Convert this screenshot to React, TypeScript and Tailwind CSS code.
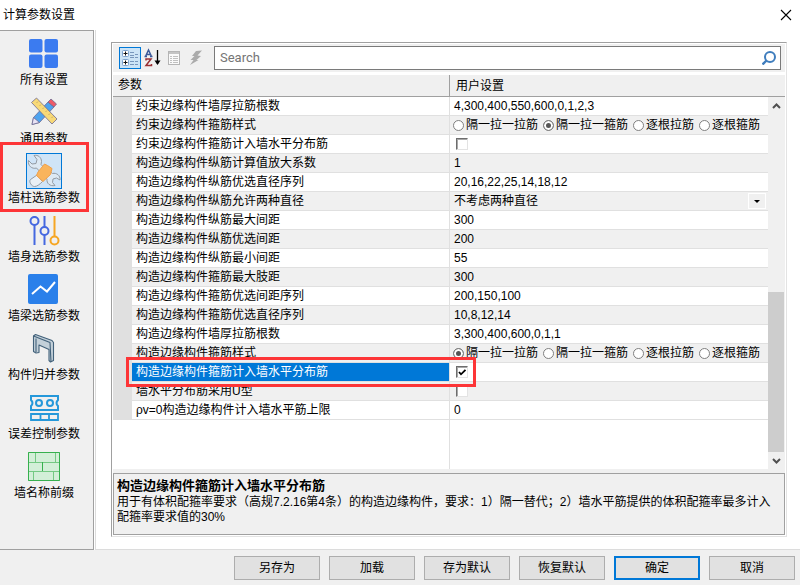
import { useState } from "react";

type Field =
    | { kind: "text"; name: string; value: string }
    | { kind: "select"; name: string; options: string[] }
    | { kind: "check"; name: string; checked: boolean; selected?: boolean }
    | { kind: "radio"; name: string; id: string; value: number };

const STYLES = ["隔一拉一拉筋", "隔一拉一箍筋", "逐根拉筋", "逐根箍筋"];

const FIELDS: Field[] = [
    { kind: "text", name: "约束边缘构件墙厚拉筋根数", value: "4,300,400,550,600,0,1,2,3" },
    { kind: "radio", name: "约束边缘构件箍筋样式", id: "ys-style", value: 1 },
    { kind: "check", name: "约束边缘构件箍筋计入墙水平分布筋", checked: false },
    { kind: "text", name: "构造边缘构件纵筋计算值放大系数", value: "1" },
    { kind: "text", name: "构造边缘构件纵筋优选直径序列", value: "20,16,22,25,14,18,12" },
    { kind: "select", name: "构造边缘构件纵筋允许两种直径", options: ["不考虑两种直径", "考虑两种直径"] },
    { kind: "text", name: "构造边缘构件纵筋最大间距", value: "300" },
    { kind: "text", name: "构造边缘构件纵筋优选间距", value: "200" },
    { kind: "text", name: "构造边缘构件纵筋最小间距", value: "55" },
    { kind: "text", name: "构造边缘构件箍筋最大肢距", value: "300" },
    { kind: "text", name: "构造边缘构件箍筋优选间距序列", value: "200,150,100" },
    { kind: "text", name: "构造边缘构件箍筋优选直径序列", value: "10,8,12,14" },
    { kind: "text", name: "构造边缘构件墙厚拉筋根数", value: "3,300,400,600,0,1,1" },
    { kind: "radio", name: "构造边缘构件箍筋样式", id: "gz-style", value: 0 },
    { kind: "check", name: "构造边缘构件箍筋计入墙水平分布筋", checked: true, selected: true },
    { kind: "check", name: "墙水平分布筋采用U型", checked: false },
    { kind: "text", name: "ρv=0构造边缘构件计入墙水平筋上限", value: "0" },
];

const GridIcon = () => (
    <svg viewBox="0 0 36 36" className="size-full" fill="#3b7bf0">
        <rect x="3" y="4" width="13.5" height="13.5" rx="2" />
        <rect x="18.5" y="4" width="13.5" height="13.5" rx="2" />
        <rect x="3" y="19.5" width="13.5" height="13.5" rx="2" />
        <rect x="18.5" y="19.5" width="13.5" height="13.5" rx="2" />
    </svg>
);

const PencilRulerIcon = () => (
    <svg viewBox="0 0 36 36" className="size-full" stroke="#6d6a92" strokeWidth=".8" strokeLinejoin="round">
        <path d="M6 30.500 7.500 23.500 22 8 28 13 13.500 28.500Z" fill="#4ea3ee" />
        <path d="M6 30.500 7.500 23.500 13.500 28.500Z" fill="#e9e3f5" />
        <path d="M22 8 25 5 30.500 10 28 13Z" fill="#ee5a68" />
        <path d="M5.500 8.500 10.500 4 31 25 26 30Z" fill="#f8d978" />
        <path d="m12 7.500-1.500 1.500m4.500 1.500-1.500 1.500m4.500 1.500-1.500 1.500m4.500 1.500-1.500 1.500m4.500 1.500-1.500 1.500m4.500 1.500-1.500 1.500" fill="none" stroke="#b59a5c" strokeWidth=".7" />
    </svg>
);

const WrenchIcon = () => (
    <svg viewBox="0 0 36 36" className="size-full" fill="#dde9f3" stroke="#939ba3" strokeWidth="1" strokeLinejoin="round">
        <path d="M8 2.500C12 1.500 15.500 4.500 15.500 8.500L15 11.500l7 7-4 4.500-7.500-8C6 16.500 1.500 12.500 2.500 7.500l3.500 3.500 4-.500 1-4Z" />
        <path d="m22 17 4.500 3.500c4-1 8 2 7.500 6.500L30.500 25 27 26l-.500 3.500 2.500 3c-5 1-8.500-2-8-6.500L17.500 22Z" />
        <path d="m11 22-6.500 4.500c-2 2 1 7 4 7 2.500 0 5-2 8-5Z" fill="#eaf0f5" />
        <path d="m18.500 11 3 1.500 4.500 3-1.500 6-7.500 7-6.500-6 1.500-3.500Z" fill="#f9b45c" stroke="#f0a04a" />
    </svg>
);

const SlidersIcon = () => (
    <svg viewBox="0 0 36 36" className="size-full" fill="none" strokeWidth="2">
        <g stroke="#4568e0">
            <circle cx="8.500" cy="9" r="4" />
            <path d="M8.500 4v1M8.500 13v20M18.500 4v11M18.500 23v10" />
            <circle cx="18.500" cy="19" r="4" />
        </g>
        <path d="M28.500 4v20" stroke="#f6a623" />
        <circle cx="28.500" cy="28.500" r="4" stroke="#f6a623" />
    </svg>
);

const TrendIcon = () => (
    <svg viewBox="0 0 36 36" className="size-full">
        <rect x="2" y="3" width="30" height="30" rx="2" fill="#2a80ea" />
        <path d="m6 23 8.500-7.500 6.500 5L29 11" fill="none" stroke="#fff" strokeWidth="2" />
    </svg>
);

const FrameIcon = () => (
    <svg viewBox="0 0 36 36" className="size-full" fill="#c3d0d9" stroke="#42617a" strokeWidth="1.100" strokeLinejoin="round">
        <path d="m7.500 6 2-1.500 16.500 6 1.500 2v18L24.500 32 23 30.500V19.500L13 15v7.500l-3 .500-2.500-1.500Z" />
        <path d="M7.500 6 24 12.500 25 32M10 8.500V22" fill="none" />
    </svg>
);

const ToleranceIcon = () => (
    <svg viewBox="0 0 36 36" className="size-full" fill="none" stroke="#2598da" strokeWidth="2">
        <path d="M5 7h27v4q-3 3 0 6v4H5v-4q3-3 0-6Z" />
        <circle cx="13" cy="14" r="3" />
        <circle cx="24" cy="14" r="3" />
        <path d="M5 25h27v6H5ZM14.500 25v6M23 25v6" strokeWidth="1.800" />
    </svg>
);

const BrickIcon = () => (
    <svg viewBox="0 0 36 36" className="size-full" fill="none" stroke="#74c983" strokeWidth="1">
        <path d="M2.500 4.500h31v28h-31Z" fill="#d3efd8" />
        <path d="M3 14.500h30M3 23.500h30M9.500 5v9M29.500 5v9M7.500 24v8M27.500 24v8" />
        <path d="M2.500 4.500h31v28h-31ZM16.500 14v9" stroke="#36b04e" />
    </svg>
);

const NAV = [
    { label: "所有设置", Icon: GridIcon },
    { label: "通用参数", Icon: PencilRulerIcon },
    { label: "墙柱选筋参数", Icon: WrenchIcon },
    { label: "墙身选筋参数", Icon: SlidersIcon },
    { label: "墙梁选筋参数", Icon: TrendIcon },
    { label: "构件归并参数", Icon: FrameIcon },
    { label: "误差控制参数", Icon: ToleranceIcon },
    { label: "墙名称前缀", Icon: BrickIcon },
];

const Sidebar = () => {
    const [active, setActive] = useState(2);

    return (
        <nav className="w-[94px] shrink-0 border-t border-r border-b border-[#a0a0a0] bg-[#f0f0f0] pt-1 pr-[5px]">
            <ul className="flex flex-col gap-[5px]">
                {NAV.map(({ label, Icon }, i) => (
                    <li key={label} className="relative">
                        <button onClick={() => setActive(i)} className="flex w-full flex-col items-center">
                            <span className={i === active ? "size-9 bg-[#cfe4f7] outline outline-1 -outline-offset-1 outline-[#0078d7]" : "size-9"}>
                                <Icon />
                            </span>
                            <span className="leading-[18px] whitespace-nowrap">{label}</span>
                        </button>
                        {i === 2 && (
                            <span className="pointer-events-none absolute -top-[11px] -right-px -bottom-[5px] left-0 z-10 border-3 border-[#fd3537]" />
                        )}
                    </li>
                ))}
            </ul>
        </nav>
    );
};

const Toolbar = () => (
    <div className="flex items-center bg-[#f0f0f0] py-[2px] pr-[4px] pl-[6px]">
        <button aria-label="按类别" className="size-[22px] border border-[#0078d7] bg-[#cce4f7]">
            <svg viewBox="0 0 20 20" className="size-5" fill="none">
                <rect x="2.500" y="2.500" width="6" height="6" rx="1" fill="#fff" stroke="#7da2ce" />
                <rect x="2.500" y="11.500" width="6" height="6" rx="1" fill="#fff" stroke="#7da2ce" />
                <path d="M3.500 5.500h4M5.500 3.500v4M3.500 14.500h4M5.500 12.500v4" stroke="#111" />
                <path d="M10 4.500h4M10 7.500h4M10 9.500h4M10 13.500h4M10 16.500h4M15 6.500h3M15 9.500h3M15 13.500h3M15 16.500h3" stroke="#7897bd" />
            </svg>
        </button>
        <button aria-label="按字母排序" className="size-[22px]">
            <svg viewBox="0 0 22 22" className="size-[22px]" fill="none">
                <path d="m4.500 9.500 3-6.500 3 6.500M5.500 7.500h4M3.500 9.500h2.500M9 9.500h2.500" stroke="#3c5a9a" strokeWidth="1.500" />
                <path d="M5 13.500v-1.500h5L5 18.500h5.500V17" stroke="#9a3034" strokeWidth="1.500" />
                <path d="M16.500 3v14" stroke="#000" strokeWidth="1.300" />
                <path d="M13.500 13.500h6L16.500 18Z" fill="#000" />
            </svg>
        </button>
        <button aria-label="属性页" className="size-[22px]">
            <svg viewBox="0 0 22 22" className="size-[22px]" fill="none">
                <rect x="5.500" y="4.500" width="11" height="13" fill="#fafafa" stroke="#b5b5b5" />
                <path d="M6 6h10" stroke="#c4c4c4" strokeWidth="2" />
                <path d="M7 9.500h2M10 9.500h5M7 11.500h2M10 11.500h5M7 13.500h2M10 13.500h5M7 15.500h2M10 15.500h5" stroke="#c0c0c0" />
            </svg>
        </button>
        <button aria-label="事件" className="size-[22px]">
            <svg viewBox="0 0 22 22" className="size-[22px]" fill="#ababab">
                <path d="m11 4 6-.500-4.500 5 3.500.500-4.500 4h2L5 18l3.500-5H5.500L9.500 9H7Z" />
            </svg>
        </button>
        <div className="ml-[7px] flex h-6 min-w-0 flex-1 items-center border border-[#7a7a7a] bg-white pr-1 pl-[5px]">
            <input
                type="search"
                aria-label="Search"
                placeholder="Search"
                className="min-w-0 flex-1 font-[Roboto] text-[13px] leading-[18px] outline-none placeholder:text-[#757575]"
            />
            <svg viewBox="0 0 14 14" className="size-[14px]" fill="none" stroke="#3f7dbd" strokeWidth="2">
                <circle cx="8" cy="6" r="5" />
                <path d="m4.500 9.500-4 4" strokeWidth="2.400" />
            </svg>
        </div>
    </div>
);

const FieldEditor = ({ field }: { field: Field }) => {
    if (field.kind === "radio") {
        return (
            <div className="flex items-center gap-[5px] pl-[3px]">
                {STYLES.map((s, i) => (
                    <label key={s} className="flex items-center gap-[2px] whitespace-nowrap">
                        <input
                            type="radio"
                            name={field.id}
                            defaultChecked={i === field.value}
                            className="size-[11px] shrink-0 appearance-none rounded-full border border-[#808080] bg-white checked:bg-[#555] checked:shadow-[inset_0_0_0_2px_white]"
                        />
                        {s}
                    </label>
                ))}
            </div>
        );
    }
    if (field.kind === "check") {
        return (
            <div className="grid h-[18px] content-center pl-[6px]">
                <input
                    type="checkbox"
                    aria-label={field.name}
                    defaultChecked={field.checked}
                    className="peer col-start-1 row-start-1 size-3 appearance-none border border-t-[#6d6d6d] border-r-[#e3e3e3] border-b-[#e3e3e3] border-l-[#6d6d6d] bg-white shadow-[inset_1px_1px_0_#a8a8a8]"
                />
                <svg viewBox="0 0 12 12" className="pointer-events-none invisible col-start-1 row-start-1 size-3 peer-checked:visible">
                    <path d="m3 6 2 2.300L9.500 3.800" fill="none" stroke="#000" strokeWidth="1.800" />
                </svg>
            </div>
        );
    }
    if (field.kind === "select") {
        return (
            <div className="grid h-[18px] items-center pr-[2px] pl-1">
                <select aria-label={field.name} className="col-start-1 row-start-1 h-[18px] w-full appearance-none bg-transparent outline-none">
                    {field.options.map((o) => (
                        <option key={o}>{o}</option>
                    ))}
                </select>
                <span className="pointer-events-none col-start-1 row-start-1 flex h-4 w-[18px] items-center justify-center justify-self-end border border-white bg-[#f0f0f0]">
                    <svg viewBox="0 0 6 3" className="h-[3px] w-[6px]">
                        <path d="M0 0h6L3 3Z" />
                    </svg>
                </span>
            </div>
        );
    }
    return <div className="pl-1">{field.value}</div>;
};

const ScrollBar = () => (
    <div className="flex w-[17px] flex-col">
        <div className="h-[22px] border-b border-[#a0a0a0] bg-[#f0f0f0]" />
        <div className="flex flex-1 flex-col bg-[#f0f0f0]">
            <button aria-label="向上滚动" className="flex h-[17px] items-center justify-center">
                <svg viewBox="0 0 9 6" className="h-[6px] w-[9px]">
                    <path d="m1 5 3.500-3.500L8 5" fill="none" stroke="#505050" strokeWidth="2" />
                </svg>
            </button>
            <div className="flex-1" />
            <div className="mr-px h-[160px] bg-[#cdcdcd]" />
            <button aria-label="向下滚动" className="flex h-[17px] items-center justify-center">
                <svg viewBox="0 0 9 6" className="h-[6px] w-[9px]">
                    <path d="m1 1 3.500 3.500L8 1" fill="none" stroke="#505050" strokeWidth="2" />
                </svg>
            </button>
        </div>
    </div>
);

const PropertyGrid = () => (
    <div className="mt-[3px] flex">
        <table className="min-w-0 flex-1 table-fixed border-separate border-spacing-0">
            <colgroup>
                <col className="w-[19px]" />
                <col className="w-[318px]" />
                <col />
            </colgroup>
            <thead>
                <tr className="h-[22px] bg-[#f0f0f0] text-left">
                    <th colSpan={2} className="border-b border-[#a0a0a0] p-0 font-normal">
                        <div className="border-r border-[#a0a0a0] pl-[5px] leading-[21px]">参数</div>
                    </th>
                    <th className="border-b border-[#a0a0a0] p-0 pl-[6px] font-normal">用户设置</th>
                </tr>
            </thead>
            <tbody>
                {FIELDS.map((f, i) => {
                    const selected = f.kind === "check" && f.selected;
                    return (
                        <tr key={f.name} className={i % 2 ? "bg-[#f0f0f0]" : "bg-white"}>
                            <td className="bg-[#e0e0e0] p-0" />
                            <td className="relative border-r border-b border-[#e0e0e0] p-0">
                                <div className={selected ? "h-[18px] bg-[#0078d7] pl-1 leading-[18px] text-white" : "h-[18px] pl-1 leading-[18px]"}>
                                    {f.name}
                                </div>
                                {selected && (
                                    <span className="pointer-events-none absolute -top-[6px] -right-[27px] -bottom-[6px] -left-[6px] z-10 border-3 border-[#fd3537]" />
                                )}
                            </td>
                            <td className="h-[19px] border-b border-[#e0e0e0] p-0 leading-[18px]">
                                <FieldEditor field={f} />
                            </td>
                        </tr>
                    );
                })}
                <tr className="h-[49px]">
                    <td className="p-0" />
                    <td className="border-r border-[#e0e0e0] p-0" />
                    <td className="p-0" />
                </tr>
            </tbody>
        </table>
        <ScrollBar />
    </div>
);

const ACTIONS = ["另存为", "加载", "存为默认", "恢复默认", "确定", "取消"];

export default function App() {
    return (
        <div className="flex min-h-screen flex-col bg-white font-['Liberation_Sans','Noto_Sans_CJK_SC',sans-serif] text-[12px] text-black">
            <header className="flex h-[30px] items-center justify-between pr-2 pl-[3px]">
                <h1>计算参数设置</h1>
                <button aria-label="关闭">
                    <svg viewBox="0 0 12 12" className="size-3">
                        <path d="m1 1 10 10M11 1 1 11" stroke="#000" strokeWidth="1.100" />
                    </svg>
                </button>
            </header>
            <div className="flex flex-1">
                <Sidebar />
                <main className="ml-px flex-1 border-b border-l border-[#dcdcdc] pt-3 pr-[13px] pb-3 pl-[15px]">
                    <div className="border border-t-[#a0a0a0] border-r-[#e3e3e3] border-b-[#e3e3e3] border-l-[#a0a0a0] p-px">
                        <Toolbar />
                        <PropertyGrid />
                        <div className="bg-[#f0f0f0] pt-1">
                            <section className="h-[62px] border border-[#a0a0a0] pt-[3px] pr-1 pl-[3px]">
                                <h2 className="text-[13px] leading-[18px] font-bold">构造边缘构件箍筋计入墙水平分布筋</h2>
                                <p className="leading-[15px]">
                                    用于有体积配箍率要求（高规7.2.16第4条）的构造边缘构件，要求：1）隔一替代；2）墙水平筋提供的体积配箍率最多计入配箍率要求值的30%
                                </p>
                            </section>
                        </div>
                    </div>
                </main>
            </div>
            <footer className="flex justify-end gap-[9px] bg-[#f0f0f0] pt-[6px] pr-[5px] pb-[5px]">
                {ACTIONS.map((a) => (
                    <button
                        key={a}
                        className={
                            a === "确定"
                                ? "h-6 w-[86px] border-2 border-[#0078d7] bg-[#e1e1e1]"
                                : "h-6 w-[86px] border border-[#adadad] bg-[#e1e1e1]"
                        }
                    >
                        {a}
                    </button>
                ))}
            </footer>
        </div>
    );
}
